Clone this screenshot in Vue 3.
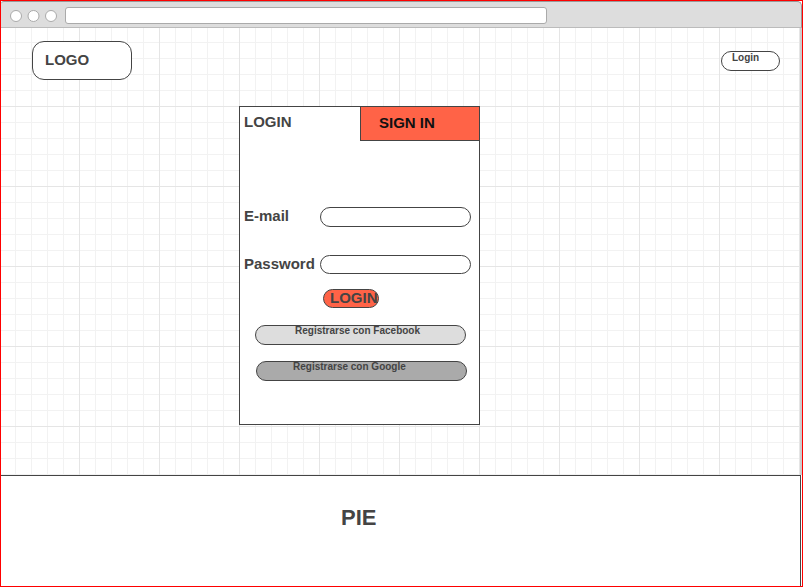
<script setup>
import { ref } from 'vue'

const address = ref('')
const email = ref('')
const password = ref('')
</script>

<template>
  <div class="window">
    <div class="chrome">
      <svg class="dots" width="48" height="14" viewBox="0 0 48 14" aria-hidden="true">
        <circle cx="7" cy="7" r="5.5" />
        <circle cx="24.5" cy="7" r="5.5" />
        <circle cx="42" cy="7" r="5.5" />
      </svg>
      <input v-model="address" class="address" type="text" aria-label="URL" />
    </div>

    <main class="canvas">
      <header class="top">
        <a class="logo" href="#">LOGO</a>
        <button class="pill top-login" type="button">Login</button>
      </header>

      <section class="card">
        <div class="tabs">
          <button class="tab" type="button">LOGIN</button>
          <button class="tab tab-sign" type="button">SIGN IN</button>
        </div>
        <form class="form" @submit.prevent>
          <div class="field">
            <label for="email">E-mail</label>
            <input id="email" v-model="email" class="pill" type="email" />
          </div>
          <div class="field">
            <label for="password">Password</label>
            <input id="password" v-model="password" class="pill pill-slim" type="password" />
          </div>
          <button class="pill pill-slim submit" type="submit">LOGIN</button>
          <button class="pill social facebook" type="button">Registrarse con Facebook</button>
          <button class="pill social google" type="button">Registrarse con Google</button>
        </form>
      </section>
    </main>

    <footer class="footer">PIE</footer>
  </div>
</template>

<style>
body {
  margin: 0;
  background: #fff;
}
</style>

<style scoped>
.window,
.window * {
  box-sizing: border-box;
}

.window {
  display: flex;
  flex-direction: column;
  min-height: 100vh;
  border: 1px solid #f00;
  font: bold 15px/18px "Liberation Sans", Arial, sans-serif;
  color: #444;
}

button,
input {
  margin: 0;
  padding: 0;
  font: inherit;
  color: inherit;
  outline: none;
}

button {
  text-align: left;
  white-space: nowrap;
  cursor: pointer;
}

.chrome {
  display: flex;
  align-items: center;
  gap: 8px;
  height: 27px;
  padding: 2px 8px 0;
  background: #ddd;
  border: 1px solid #999;
  border-left: 0;
  border-bottom-color: #bbb;
  border-radius: 3px 5px 0 0;
}

.dots {
  flex: none;
  fill: #fff;
  stroke: #aaa;
}

.address {
  flex: 0 1 482px;
  min-width: 0;
  height: 17px;
  padding: 0 6px;
  background: #fff;
  border: 1px solid #aaa;
  border-radius: 3px;
  font-size: 10px;
}

.canvas {
  padding-bottom: 50px;
  border-right: 2px solid #ccc;
  background-color: #fff;
  background-image:
    linear-gradient(90deg, #e5e5e5 1px, transparent 1px),
    linear-gradient(#e5e5e5 1px, transparent 1px),
    linear-gradient(90deg, #f2f2f2 1px, transparent 1px),
    linear-gradient(#f2f2f2 1px, transparent 1px);
  background-size: 80px 80px, 80px 80px, 16px 16px, 16px 16px;
  background-position: 78px 78px, 78px 78px, 14px 14px, 14px 14px;
}

.top {
  display: flex;
  justify-content: space-between;
  align-items: center;
  padding: 13px 20px 26px 31px;
}

.logo {
  width: 100px;
  padding: 9px 12px 10px;
  background: #fff;
  border: 1px solid #444;
  border-radius: 12px;
  color: inherit;
  text-decoration: none;
}

.pill {
  height: 20px;
  background: #fff;
  border: 1px solid #444;
  border-radius: 10px;
}

.pill-slim {
  height: 19px;
}

.top-login {
  width: 59px;
  padding: 0 0 6px 10px;
  font-size: 10px;
  line-height: 12px;
}

.card {
  width: 241px;
  margin-left: 238px;
  background: #fff;
  border: 1px solid #444;
}

.tabs {
  display: grid;
  grid-template-columns: 120px 1fr;
}

.tab {
  height: 34px;
  padding: 0 4px 4px;
  background: none;
  border: 0;
}

.tab-sign {
  padding: 0 4px 2px 18px;
  background: #ff6347;
  border: solid #444;
  border-width: 0 0 1px 1px;
  color: #111;
}

.form {
  display: flex;
  flex-direction: column;
  align-items: flex-start;
  gap: 15px;
  padding: 66px 8px 43px 4px;
}

.field {
  display: grid;
  grid-template-columns: 76px 1fr;
  align-items: start;
  width: 100%;
}

.field + .field {
  margin-top: 13px;
}

.field .pill {
  width: 100%;
  padding: 0 8px;
  font-size: 12px;
}

.submit {
  width: 56px;
  margin-left: 79px;
  padding: 0 0 2px 6px;
  background: #ff6347;
  line-height: 15px;
}

.social {
  width: 211px;
  padding: 0 0 8px 39px;
  font-size: 10px;
  line-height: 10px;
}

.facebook {
  margin: 2px 0 0 11px;
  background: #ddd;
}

.google {
  margin: 1px 0 0 12px;
  padding-left: 36px;
  background: #aaa;
}

.footer {
  flex: 1;
  min-height: 111px;
  margin-right: 1px;
  padding: 29px 340px 0;
  background: #fff;
  border: solid #444;
  border-width: 1px 1px 0 0;
  font-size: 22px;
  line-height: 26px;
}
</style>
